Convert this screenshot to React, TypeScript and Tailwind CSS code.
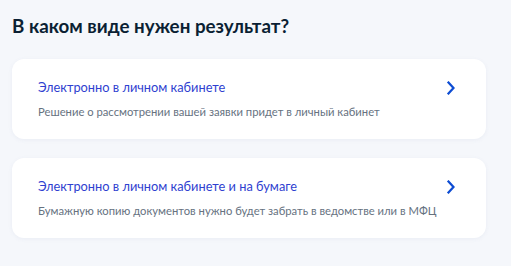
import React from "react";

function Chevron() {
  return (
    <svg width="10" height="14" viewBox="0 0 10 14" fill="none">
      <path d="M2.5 1.5L7.5 7L2.5 12.5" stroke="#0d4cd3" strokeWidth="2.2" strokeLinecap="square" />
    </svg>
  );
}

function Card({ title, sub }: { title: string; sub: string }) {
  return (
    <div className="flex h-[80px] items-start justify-between rounded-[12px] bg-white pl-[26px] pr-[30px] pt-[20px] shadow-[0_1px_4px_rgba(100,120,160,0.08)]">
      <div className="flex flex-col">
        <div className="text-[12.8px] leading-[16px] text-[#2f3fd0]">{title}</div>
        <div className="mt-[10px] text-[11.25px] leading-[14px] text-[#66727f]">{sub}</div>
      </div>
      <div className="pt-[2px]">
        <Chevron />
      </div>
    </div>
  );
}

export default function App() {
  return (
    <div
      className="h-[266px] w-[511px] bg-[#f5f7fb] px-[12px] pt-[14px]"
      style={{ fontFamily: "Lato, 'Noto Sans', sans-serif" }}
    >
      <h1 className="text-[18.8px] font-bold leading-[24px] text-[#0b1f33]">В каком виде нужен результат?</h1>
      <div className="mt-[21px] mr-[13px] flex flex-col gap-[19px]">
        <Card title="Электронно в личном кабинете" sub="Решение о рассмотрении вашей заявки придет в личный кабинет" />
        <Card
          title="Электронно в личном кабинете и на бумаге"
          sub="Бумажную копию документов нужно будет забрать в ведомстве или в МФЦ"
        />
      </div>
    </div>
  );
}
